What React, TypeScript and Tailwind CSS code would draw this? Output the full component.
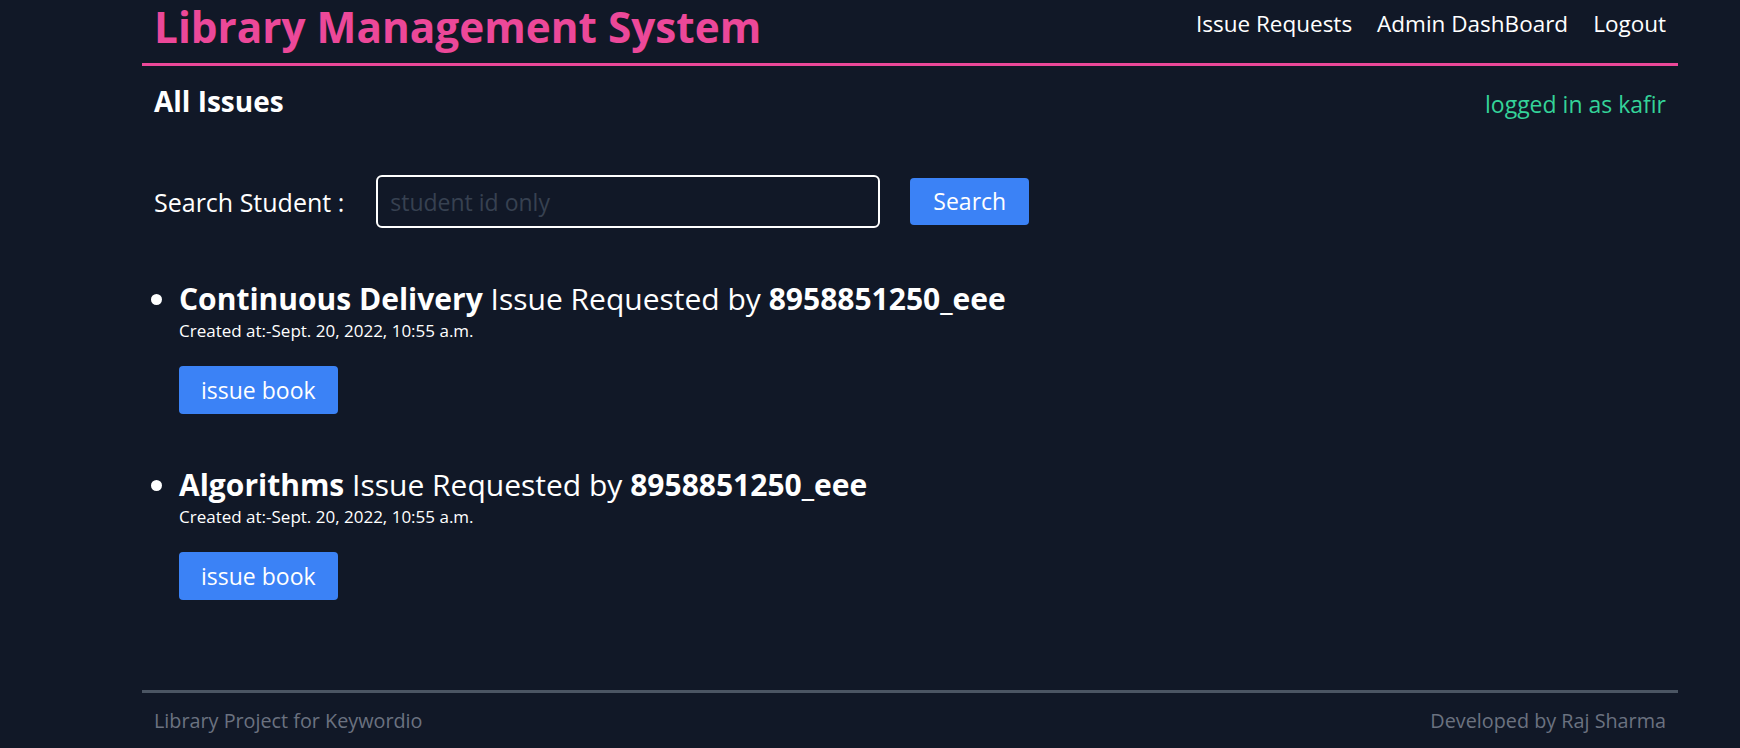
const issues = [
  { book: "Continuous Delivery", student: "8958851250_eee", created: "Sept. 20, 2022, 10:55 a.m." },
  { book: "Algorithms", student: "8958851250_eee", created: "Sept. 20, 2022, 10:55 a.m." },
]

export default function App() {
  return (
    <div className="min-h-[748px] bg-[#111827] text-white font-['Open_Sans',sans-serif]">
      <div className="ml-[142px] w-[1536px]">
        {/* header */}
        <header className="flex h-[66px] items-start justify-between border-b-[3px] border-[#ec4899] px-3">
          <h1 className="mt-[1px] text-[42.3px] font-bold leading-[52px] text-[#ec4899]">
            Library Management System
          </h1>
          <nav className="mt-[10px] flex gap-[25px] text-[22.5px] leading-[28px]">
            <a href="#">Issue Requests</a>
            <a href="#">Admin DashBoard</a>
            <a href="#">Logout</a>
          </nav>
        </header>

        <div className="mt-[19px] flex items-start justify-between px-3">
          <h2 className="text-[28px] font-bold leading-[32px]">All Issues</h2>
          <p className="mt-[3px] text-[23px] leading-[32px] text-[#34d399]">logged in as kafir</p>
        </div>

        {/* search */}
        <form className="mt-[55px] flex items-center px-3" onSubmit={(e) => e.preventDefault()}>
          <label className="text-[25px] leading-[32px]">Search Student :</label>
          <input
            type="text"
            placeholder="student id only"
            className="ml-[32px] h-[53px] w-[504px] rounded-md border-2 border-white bg-transparent px-3 text-[23px] text-white outline-none placeholder:text-[#374151]"
          />
          <button className="ml-[30px] h-[47px] w-[119px] rounded bg-[#3b82f6] text-[23px] text-white">
            Search
          </button>
        </form>

        {/* list */}
        <ul className="mt-[51px] list-disc pl-[37px]">
          {issues.map((it, i) => (
            <li key={i} className="mb-[51px] text-[30px] leading-[40px]">
              <span className="font-bold">{it.book}</span> Issue Requested by{" "}
              <span className="font-bold">{it.student}</span>
              <p className="text-[17px] leading-[24px]">Created at:-{it.created}</p>
              <button className="mt-[23px] h-[48px] rounded bg-[#3b82f6] px-[22px] text-[23px] leading-[28px]">
                issue book
              </button>
            </li>
          ))}
        </ul>

        {/* footer */}
        <footer className="mt-[90px] border-t-[3px] border-[#4b5563]">
          <div className="flex justify-between px-3 pt-[14px] text-[19.8px] leading-[28px] text-[#6b7280]">
            <span>Library Project for Keywordio</span>
            <span>Developed by Raj Sharma</span>
          </div>
        </footer>
      </div>
    </div>
  )
}
